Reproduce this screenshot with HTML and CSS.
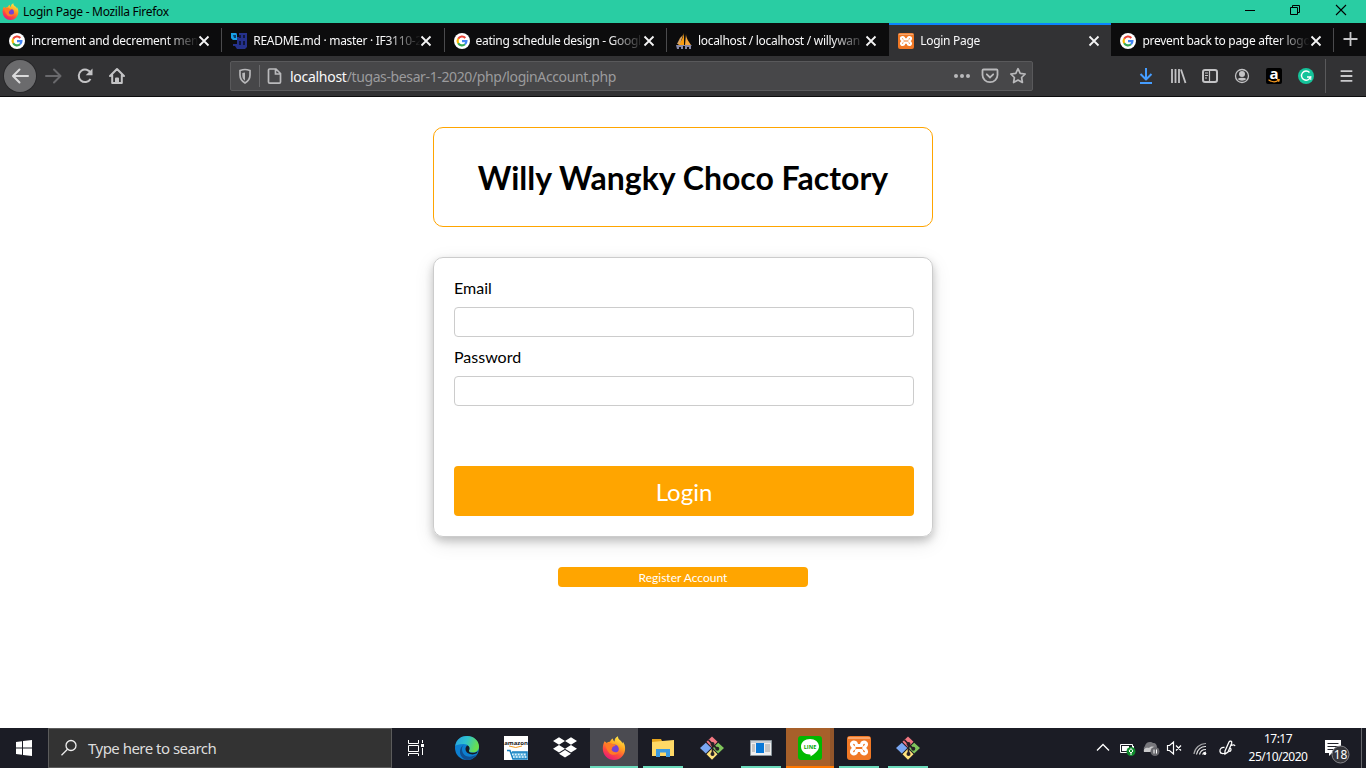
FILE: index.html
```html
<!DOCTYPE html>
<html lang="en">
<head>
<meta charset="utf-8">
<title>Login Page</title>
<link rel="stylesheet" href="styles.css">
</head>
<body>
<svg class="defs" width="0" height="0">
  <defs>
    <linearGradient id="flame" x1=".8" y1="0" x2=".3" y2="1"><stop offset="0" stop-color="#fff44f"/><stop offset=".4" stop-color="#ffa21f"/><stop offset=".7" stop-color="#ff4b3e"/><stop offset="1" stop-color="#e5177b"/></linearGradient>
    <linearGradient id="edgeTop" x1="0" y1="0" x2="1" y2=".3"><stop offset="0" stop-color="#289fe0"/><stop offset=".5" stop-color="#2fc2cf"/><stop offset="1" stop-color="#68df4e"/></linearGradient>
    <symbol id="google" viewBox="0 0 16 16"><circle cx="8" cy="8" r="8" fill="#fff"/><g fill="none" stroke-width="2.2"><path d="M4.2 5.8A4.4 4.4 0 0 1 11.3 4.9" stroke="#ea4335"/><path d="M4.2 10.2a4.4 4.4 0 0 1 0-4.4" stroke="#fbbc05"/><path d="M11 11.3A4.4 4.4 0 0 1 4.2 10.2" stroke="#34a853"/><path d="M8 8.2h4.4A4.4 4.4 0 0 1 11 11.3" stroke="#4285f4"/></g></symbol>
    <symbol id="close" viewBox="0 0 12 12"><path d="M1.5 1.5l9 9M10.5 1.5l-9 9" fill="none" stroke="#f4f4f5" stroke-width="1.8"/></symbol>
    <symbol id="firefox" viewBox="0 0 24 24"><path d="M2.6 5.2l2.2 1.7C6 6 7 5.8 8 5.8 8.500 4.300 9.600 3 11 2.400c-.1 1.400.4 2.400 1.700 3.200C12.300 3.400 13.500 1.300 16 .3c-.1 2.600 1.200 3.300 3 4.800.8.7 1.100 1.600 1.400 2.500l.6-1.900c1.400 2.100 2.300 4.500 2.100 7.200A11.200 11.200 0 0 1 12 24 11.200 11.200 0 0 1 .8 12.800c0-3 .4-5 1.800-7.600z" fill="url(#flame)"/><circle cx="12.200" cy="13" r="4.600" fill="#7542d5"/><path d="M3 7.500c2.600-1.300 6-.9 8.300 1.100l2.500.2c-.5 1.500-2.600 1.500-3.400 2.400-.4.600 0 1.400-1 2.400.9 2.800 5.400 3.700 8 1.200-1 4-6.600 5.500-10 2.400C4.800 14.600 4 11 3 7.500z" fill="#ff7a26"/></symbol>
    <symbol id="xampp" viewBox="0 0 24 24"><rect width="24" height="24" rx="3" fill="#f07825"/><path d="M1 1h22v2H1z" fill="#f8a56c"/><path d="M9.500 9.500C9.500 5 4.500 5.500 4.500 8.300c0 2.500 1.700 2.200 2.700 3.700-1 1.500-2.700 1.200-2.700 3.700 0 2.800 5 3.300 5-1.200h5c0 4.500 5 4 5 1.200 0-2.500-1.700-2.200-2.700-3.700 1-1.500 2.700-1.200 2.700-3.700 0-2.800-5-3.300-5 1.200z" fill="none" stroke="#fff" stroke-width="3.200" stroke-linejoin="round"/></symbol>
    <symbol id="git" viewBox="0 0 24 24"><path d="M12 .5l5.500 5.300-5.500 5.600-5.500-5.600z" fill="#f27882"/><path d="M5.800 6.700l5.500 5.300-5.500 5.500L0 12z" fill="#7aa7f2"/><path d="M18.200 6.700L24 12l-5.800 5.500-5.500-5.500z" fill="#80c55c"/><path d="M12 12.700l5.500 5.500L12 23.700l-5.500-5.500z" fill="#ffe27c"/><path d="M8.500 4l4 4v10M12.500 8.500l4.500 4" fill="none" stroke="#272126" stroke-width="1.7"/><g fill="#272126"><circle cx="12.500" cy="8" r="2"/><circle cx="12.500" cy="18" r="2"/><circle cx="17.300" cy="12.700" r="2"/></g></symbol>
  </defs>
</svg>

<header class="titlebar">
  <svg class="app-icon" width="17" height="17"><use href="#firefox"/></svg>
  <span class="window-title">Login Page - Mozilla Firefox</span>
  <div class="window-controls">
    <svg width="46" height="23" viewBox="0 0 46 23"><path d="M18 10.500h10" stroke="#000"/></svg>
    <svg width="46" height="23" viewBox="0 0 46 23"><path d="M17.500 7.500h7v7h-7zM19.500 7V5.500h7v7H25" fill="none" stroke="#000"/></svg>
    <svg width="46" height="23" viewBox="0 0 46 23"><path d="M17 5l10 10M27 5L17 15" stroke="#000" stroke-width="1.100"/></svg>
  </div>
</header>

<nav class="tabs">
  <div class="tab"><svg class="favicon"><use href="#google"/></svg><span class="tab-label">increment and decrement men</span><svg class="tab-close"><use href="#close"/></svg></div>
  <div class="tab"><svg class="favicon" viewBox="0 0 16 16"><path d="M0 0h6v4h2V0h8v14l-2 2H6l-2-3H2v-2h4V7H2L0 5z" fill="#25318b"/><path d="M0 0h5l1 2v5H2L0 5z" fill="#17a1e6"/><path d="M2 2h3v3H3z" fill="#0c3c70"/><path d="M8 2h2v3H8zM12 2h2v3h-2zM8 8h2v4H8zM12 8h2v4h-2z" fill="#10183c"/></svg><span class="tab-label">README.md · master · IF3110-2</span><svg class="tab-close"><use href="#close"/></svg></div>
  <div class="tab"><svg class="favicon"><use href="#google"/></svg><span class="tab-label">eating schedule design - Googl</span><svg class="tab-close"><use href="#close"/></svg></div>
  <div class="tab before-active"><svg class="favicon" viewBox="0 0 16 16"><path d="M8 0v12H2c3-3 5-7 6-12z" fill="#f89c0e"/><path d="M10 1c0 4 3 8 5 11H9z" fill="#f5a63c"/><path d="M4 5l3-3-3 9H1z" fill="#d8a465"/><path d="M0 12h16l-1 1v3h-2v-2h-2v2H9v-3H7v3H5v-2H3v2H1z" fill="#8789a8"/></svg><span class="tab-label">localhost / localhost / willywan</span><svg class="tab-close"><use href="#close"/></svg></div>
  <div class="tab active"><svg class="favicon"><use href="#xampp"/></svg><span class="tab-label">Login Page</span><svg class="tab-close"><use href="#close"/></svg></div>
  <div class="tab last"><svg class="favicon"><use href="#google"/></svg><span class="tab-label">prevent back to page after logo</span><svg class="tab-close"><use href="#close"/></svg></div>
  <svg class="new-tab" width="32" height="33" viewBox="0 0 32 33"><path d="M9.500 16h14M16.500 9v14" stroke="#c8c8ca" stroke-width="1.800"/></svg>
</nav>

<div class="toolbar">
  <div class="nav-buttons">
    <span class="back"><svg width="32" height="32" viewBox="0 0 32 32"><path d="M24 16H9.500M15.500 9.500L9 16l6.500 6.500" fill="none" stroke="#dadadb" stroke-width="2" stroke-linecap="round" stroke-linejoin="round"/></svg></span>
    <svg width="32" height="32" viewBox="0 0 32 32"><path d="M9 16h14M17 9.500l6.500 6.500-6.500 6.500" fill="none" stroke="#69696c" stroke-width="2" stroke-linecap="round" stroke-linejoin="round"/></svg>
    <svg width="32" height="32" viewBox="0 0 32 32"><path d="M21.800 13.200A6.300 6.300 0 1 0 21.500 19" fill="none" stroke="#c3c3c5" stroke-width="2"/><path d="M23.500 8.500v6.800h-6.800z" fill="#c3c3c5"/></svg>
    <svg width="32" height="32" viewBox="0 0 32 32"><path d="M9 16l7-7 7 7M11.200 15v8h9.600v-8M15 23v-4.500h2V23" fill="none" stroke="#c3c3c5" stroke-width="2" stroke-linejoin="round" stroke-linecap="round"/></svg>
  </div>
  <div class="address">
    <svg width="28" height="28" viewBox="0 0 28 28"><path d="M14 7.500c2 0 3.500.5 5 1v4.500c0 4-1.500 6-5 8-3.500-2-5-4-5-8V8.500c1.500-.5 3-1 5-1z" fill="none" stroke="#b7b7b9" stroke-width="1.700"/><path d="M14 10.500v8.200c-2-1.500-2.700-3-2.700-5.500v-2.300z" fill="#b7b7b9"/></svg>
    <span class="address-divider"></span>
    <svg width="28" height="28" viewBox="0 0 28 28"><path d="M8.500 7H15l4.500 4.500V20a1.200 1.200 0 0 1-1.200 1.200H8.700A1.200 1.200 0 0 1 7.500 20V8a1 1 0 0 1 1-1zM14.500 7.500V12H19" fill="none" stroke="#bababc" stroke-width="1.700"/></svg>
    <span class="url"><b>localhost</b>/tugas-besar-1-2020/php/loginAccount.php</span>
    <div class="page-actions">
      <svg width="28" height="28" viewBox="0 0 28 28" fill="#b9b9bb"><circle cx="8" cy="14" r="2"/><circle cx="14" cy="14" r="2"/><circle cx="20" cy="14" r="2"/></svg>
      <svg width="28" height="28" viewBox="0 0 28 28"><path d="M7.500 7.500h13a1 1 0 0 1 1 1V13a7.500 7.200 0 0 1-15 0V8.500a1 1 0 0 1 1-1zM10.800 12.300l3.200 3.200 3.200-3.200" fill="none" stroke="#b9b9bb" stroke-width="1.800" stroke-linecap="round"/></svg>
      <svg width="28" height="28" viewBox="0 0 28 28"><path d="M14 6.700l2.200 4.600 5 .7-3.600 3.500.8 5-4.400-2.400-4.400 2.400.8-5L6.800 12l5-.7z" fill="none" stroke="#b9b9bb" stroke-width="1.700" stroke-linejoin="round"/></svg>
    </div>
  </div>
  <div class="tools">
    <svg width="32" height="32" viewBox="0 0 32 32"><path d="M16 8v11M10.500 14l5.500 5.500 5.500-5.500M10 23h12" fill="none" stroke="#459dff" stroke-width="2" stroke-linejoin="round"/></svg>
    <svg width="32" height="32" viewBox="0 0 32 32"><path d="M10 9v14M13.500 9v14M17 9v14M19 9.500l4.500 13.500" fill="none" stroke="#c3c3c5" stroke-width="1.800"/></svg>
    <svg width="32" height="32" viewBox="0 0 32 32"><rect x="9" y="10" width="14" height="12" rx="2" fill="none" stroke="#c3c3c5" stroke-width="2"/><path d="M15.500 10v12M11 13h3M11 15.500h3M11 18h2" stroke="#c3c3c5" stroke-width="1.200"/></svg>
    <svg width="32" height="32" viewBox="0 0 32 32"><circle cx="16" cy="16" r="6.500" fill="none" stroke="#c3c3c5" stroke-width="1.300"/><circle cx="16" cy="14" r="3" fill="#c3c3c5"/><path d="M11.500 19a6 3.500 0 0 1 9 0 6 5 0 0 1-9 0z" fill="#c3c3c5"/></svg>
    <svg width="32" height="32" viewBox="0 0 32 32"><rect x="8" y="8" width="16" height="16" rx="2"/><text x="16" y="18.500" text-anchor="middle" class="amazon-a">a</text><path d="M10.500 19.800q5.500 3.800 10 .5M19 19.300l2.300.3-.7 2.200" fill="none" stroke="#f99b20" stroke-width="1.100"/></svg>
    <svg width="32" height="32" viewBox="0 0 32 32"><circle cx="16" cy="16" r="8" fill="#15c39a"/><path d="M19.500 12.500A4.600 4.600 0 1 0 20.500 17H17" fill="none" stroke="#fff" stroke-width="1.400"/><path d="M20.800 16.500v3.500" stroke="#fff"/></svg>
  </div>
  <svg class="menu" width="40" height="34" viewBox="0 0 40 34"><path d="M15 12h12M15 17h12M15 22h12" stroke="#c9c9cb" stroke-width="2"/></svg>
</div>

<main class="page">
  <div class="brand"><h1>Willy Wangky Choco Factory</h1></div>
  <form class="login-card">
    <label for="email">Email</label>
    <input id="email" type="text">
    <label for="password">Password</label>
    <input id="password" type="password">
    <button class="login" type="button">Login</button>
  </form>
  <button class="register" type="button">Register Account</button>
</main>

<footer class="taskbar">
  <div class="start"><svg width="16" height="16" viewBox="0 0 16 16" fill="#fff"><path d="M0 2l6-.8v6.300H0zM7 1l9-1v7.500H7zM0 8.500h6v6.300L0 14zM7 8.500h9V16l-9-1.100z"/></svg></div>
  <div class="search"><svg width="18" height="18" viewBox="0 0 18 18"><circle cx="11" cy="6.500" r="5" fill="none" stroke="#eee" stroke-width="1.300"/><path d="M7.500 10.200L1.500 16.300" stroke="#eee" stroke-width="1.300"/></svg><span>Type here to search</span></div>
  <div class="apps">
    <div class="app"><svg width="24" height="24" viewBox="0 0 24 24"><path d="M4.500 4v3.500h10V4M4.500 20v-2.500h10V20M4.500 9.500h10v6h-10zM18.500 4v3M18.500 12v7" fill="none" stroke="#fff"/><path d="M17 8h3v3h-3z" fill="#fff"/></svg></div>
    <div class="app wide"><svg width="24" height="24" viewBox="0 0 24 24"><circle cx="12" cy="12" r="12" fill="#0d7fd0"/><path d="M.2 10C1.500 3 6 0 12 0c7 0 12 5 12 10.500 0 4-3 6-6.500 6-2.500 0-4-1-3.500-2 2-3-1-6.500-5.500-6.500C4 8 1 9 .2 10z" fill="url(#edgeTop)"/><path d="M9 8.500C6 11 6.500 16 9.500 19c3 2.500 8 2 12-.5-2 3.500-5.500 5.500-9.500 5.500C5 23 2 13 9 8.500z" fill="#104f92"/><path d="M12.500 9.500c2 .5 2.500 3 1.500 5-.5 1.500 1.500 2.500 4 2.300 2 0 4-.8 5-1.800l-1.200 2.300c-4 2.500-11.300.7-11.300-4.300 0-1.500.7-2.900 2-3.500z" fill="#191a23"/></svg></div>
    <div class="app"><svg width="24" height="24" viewBox="0 0 24 24"><path d="M0 0h24v24H0z" fill="#fff"/><text x="12" y="9" text-anchor="middle" class="amazon-word">amazon</text><path d="M5 10q7 3 13 0" fill="none" stroke="#f49a22"/><path d="M3 14.500h3l3 8.500h14V16H8" fill="#65b5df" stroke="#1780c0" stroke-width="1.500"/><path d="M8 18.500h15M9 21h14" stroke="#e4f5fd" stroke-dasharray="1.500 1.500" stroke-width="1.500"/></svg></div>
    <div class="app"><svg width="24" height="24" viewBox="0 0 24 24" fill="#fff"><path d="M6 1.200l6 3.800-6 3.800L0 5zM18 1.200L24 5l-6 3.800L12 5zM6 8.900l6 3.800-6 3.800-6-3.800zM18 8.900l6 3.800-6 3.800-6-3.800zM12 14l6 3.800-6 3.700-6-3.700z"/></svg></div>
    <div class="app current"><svg width="24" height="24"><use href="#firefox"/></svg></div>
    <div class="app running"><svg width="24" height="24" viewBox="0 0 24 24"><path d="M1 3h9l1 2h12v15H1z" fill="#e7a51d"/><path d="M1 6l10-1 12-1v16H1z" fill="#ffd967"/><path d="M5 13h14v8h-4v-4.500H9V21H5z" fill="#3b9ae1"/></svg></div>
    <div class="app"><svg width="24" height="24"><use href="#git"/></svg></div>
    <div class="app running"><svg width="24" height="24" viewBox="0 0 24 24"><path d="M1.500 4.500h21v15h-21z" fill="#eee" stroke="#8b969d"/><path d="M2 5h20v2H2z" fill="#c9ced3"/><path d="M7 7h8v10H7z" fill="#0878d7"/><path d="M3 9h3M3 11h3M3 13h3M3 15h3M16 9h5M16 11h5M16 13h5M16 15h5" stroke="#9a9a9a"/></svg></div>
    <div class="app alert"><svg width="24" height="24" viewBox="0 0 24 24"><rect width="24" height="24" rx="3" fill="#00b900"/><path d="M12 3c5 0 9 3.100 9 7.500 0 4-4.500 7.500-8.500 10 .2-1.300.2-2-.5-2-5 0-9-3.500-9-8S7 3 12 3z" fill="#fff"/><text x="12" y="13" text-anchor="middle" class="line-word">LINE</text></svg></div>
    <div class="app running"><svg width="24" height="24"><use href="#xampp"/></svg></div>
    <div class="app running"><svg width="24" height="24"><use href="#git"/></svg></div>
  </div>
  <div class="tray">
    <svg width="24" height="24" viewBox="0 0 24 24"><path d="M7 14.500l6-6 6 6" fill="none" stroke="#fff" stroke-width="1.300"/></svg>
    <svg width="24" height="24" viewBox="0 0 24 24"><path d="M6.500 8.500h12v8h-12z" fill="none" stroke="#fff"/><path d="M8 10h7v5H8zM19 10h1v4h-1z" fill="#fff"/><circle cx="17" cy="15.500" r="4.500" fill="#0f8a2c"/><path d="M17 12.500l2 2.500-2 2-2-2zM17 16v3" fill="none" stroke="#fff"/></svg>
    <svg width="24" height="24" viewBox="0 0 24 24"><path d="M8 16a3.500 3.500 0 0 1-1-6 5 5 0 0 1 8-3c3 0 4 2 4 5v4z" fill="#77777c"/><path d="M6 16c-1-3 2-5 5-4 3-3 7-1 8 2v2z" fill="#c9c9cb"/><circle cx="17" cy="15.500" r="4.500" fill="#68686d"/><path d="M16 13.500v4M18.500 13.500v4" stroke="#fff"/></svg>
    <svg width="24" height="24" viewBox="0 0 24 24"><path d="M5.500 9.500h2l4-3.500v12l-4-3.500h-2zM14 9.500l5 5M19 9.500l-5 5" fill="none" stroke="#fff" stroke-width="1.200"/></svg>
    <svg class="wifi" width="24" height="24" viewBox="0 0 24 24"><g fill="none" stroke="#e4e4e4" stroke-width="1.200"><path d="M6 18A12 12 0 0 1 18 7.500" opacity=".7"/><path d="M8.500 18.500a9 9 0 0 1 9.500-8M11.500 18.500a6.500 6.500 0 0 1 6.500-5M14.500 18.500a4 4 0 0 1 3.500-2.500"/></g><circle cx="16.800" cy="17.500" r="1.500" fill="#fff"/></svg>
    <svg class="pen" width="24" height="24" viewBox="0 0 24 24"><path d="M10 15l4-9c.9-1.700 3.300-.8 2.700 1.200L13 16l-3 2zM9.500 11.500c-3-.5-5 1.500-4.500 4 .5 2.300 3 2.500 5 1.500M13.500 15c2.500 1 3-1.500 2-3M16 9.500c2-1 3.500-1 4 .5" fill="none" stroke="#fff" stroke-width="1.300"/></svg>
    <div class="clock"><span class="time">17:17</span><span class="date">25/10/2020</span></div>
    <svg class="notice" width="30" height="32" viewBox="0 0 30 32"><path d="M2 8h16v13H9l-3 3v-3H2z" fill="#fff"/><path d="M4.500 11.500h11M4.500 14.500h11M4.500 17.500h6" stroke="#21222a"/><circle cx="17.500" cy="22.500" r="8.500" fill="#36363b" stroke="#85858a"/><text x="17.500" y="26.700" text-anchor="middle" class="notice-count">18</text></svg>
    <span class="desktop-edge"></span>
  </div>
</footer>
</body>
</html>
```
FILE: styles.css
```css
* { box-sizing: border-box; }
body { margin: 0; width: 1366px; height: 768px; overflow: hidden; display: flex; flex-direction: column; background: #fff; font-family: "Noto Sans", "Open Sans", sans-serif; }
svg { display: block; flex: none; }
.defs { height: 0; }
.titlebar { height: 23px; background: #29cda3; display: flex; align-items: center; flex: none; }
.app-icon { margin-left: 2px; }
.window-title { margin-left: 4px; font-size: 12px; letter-spacing: -.29px; line-height: 23px; white-space: nowrap; }
.window-controls { display: flex; margin-left: auto; margin-right: 1px; }

.tabs { height: 33px; flex: none; display: flex; background: #0c0c0d; }
.tab { width: 222.3px; flex: none; display: flex; align-items: center; padding: 2px 12px 0 9px; background: linear-gradient(#4b4b4d, #4b4b4d) right 5px / 1px 24px no-repeat; color: #f9f9fa; }
.tab.before-active { background: none; }
.tab.active { background: #323234; border-top: 2px solid #0a84ff; padding-top: 0; }
.favicon { width: 16px; height: 16px; margin-right: 6px; }
.tab-label { width: 167px; flex: none; font-size: 12px; line-height: 20px; letter-spacing: -.29px; white-space: nowrap; -webkit-mask-image: linear-gradient(to right, #000 134px, transparent 168px); mask-image: linear-gradient(to right, #000 134px, transparent 168px); }
.tab-close { width: 12px; height: 12px; }
.active .tab-close, .last .tab-close { margin-left: 1px; }

.toolbar { height: 41px; flex: none; display: flex; align-items: center; background: #323234; border-bottom: 1px solid #0c0c0d; }
.nav-buttons { display: flex; margin-left: 4px; width: 226px; align-items: center; }
.back { margin-right: 1px; border-radius: 50%; background: #6b6b6d; box-shadow: 0 0 0 1px #28282a; }
.address { width: 803px; height: 30px; display: flex; align-items: center; background: #474749; border: 1px solid #59595b; border-radius: 2px; }
.address-divider { width: 1px; height: 22px; background: #68686a; margin-right: 1px; }
.url { font-size: 14px; letter-spacing: -.38px; color: #9b9b9d; margin-left: 1px; white-space: nowrap; }
.url b { color: #f9f9fa; font-weight: 400; letter-spacing: -.28px; }
.page-actions { display: flex; margin-left: auto; }
.tools { display: flex; margin-left: 97px; }
.menu { margin-left: 3px; border-left: 1px solid #59595b; }

.page { height: 631px; flex: none; display: flex; flex-direction: column; align-items: center; padding-top: 30px; font-family: Lato, sans-serif; }
.brand { width: 500px; height: 100px; flex: none; display: flex; align-items: center; justify-content: center; border: 1px solid orange; border-radius: 10px; }
.brand h1 { margin: 2px 0 0; font-size: 32px; font-weight: 700; line-height: 38px; white-space: nowrap; }
.login-card { width: 500px; height: 280px; flex: none; margin-top: 30px; padding: 20px; display: flex; flex-direction: column; border: 1px solid #ccc; border-radius: 10px; box-shadow: 0 4px 8px rgba(0,0,0,.2), 0 6px 20px rgba(0,0,0,.1); }
.login-card label { font-size: 16px; line-height: 19px; }
.login-card input { width: 460px; height: 30px; flex: none; margin: 10px 0; border: 1px solid #ccc; border-radius: 4px; background: #fff; }
.login { width: 460px; height: 50px; flex: none; margin-top: 50px; padding: 0; border: 0; border-radius: 4px; background: orange; color: #fff; font: 24px Lato, sans-serif; }
.register { width: 250px; height: 20px; flex: none; margin-top: 30px; padding: 0; border: 0; border-radius: 4px; background: orange; color: #fff; font: 12px Lato, sans-serif; }

.taskbar { height: 40px; flex: none; display: flex; background: #1b1c25; color: #fff; }
.start { width: 48px; display: flex; align-items: center; justify-content: center; }
.search { width: 344px; display: flex; align-items: center; gap: 10px; padding-left: 11px; background: #333; border: 1px solid #5b5b5b; color: #ddd; }
.search span { font-size: 15px; letter-spacing: -.52px; }
.apps { display: flex; gap: 1px; }
.app { width: 48px; height: 40px; display: flex; align-items: center; justify-content: center; }
.app.wide { width: 50px; padding-left: 2px; }
.app.running { background: linear-gradient(#6bdabb, #6bdabb) center bottom / 40px 2px no-repeat; }
.app.current { background: #4b4b51; border-bottom: 2px solid #6bdabb; padding-top: 2px; }
.app.alert { background: linear-gradient(to right, #a7602a 44px, #91552a 44px); border-bottom: 2px solid #ff7800; padding-top: 2px; }
.tray { margin-left: auto; display: flex; align-items: center; }
.wifi { margin-left: 2px; }
.pen { margin-left: 3px; }
.clock { width: 68px; margin-left: 5px; display: flex; flex-direction: column; align-items: center; font-size: 12px; line-height: 18px; letter-spacing: -.5px; }
.notice { margin-left: 11px; }
.desktop-edge { width: 5px; height: 40px; margin-left: 8px; border-left: 1px solid #66676c; }
.amazon-a { font: 700 15px "Open Sans", sans-serif; fill: #fff; }
.amazon-word { font: 700 6px "Open Sans", sans-serif; fill: #222; }
.line-word { font: 700 5.5px "Open Sans", sans-serif; fill: #00a900; }
.notice-count { font: 12px "Noto Sans", sans-serif; fill: #fff; }
```
